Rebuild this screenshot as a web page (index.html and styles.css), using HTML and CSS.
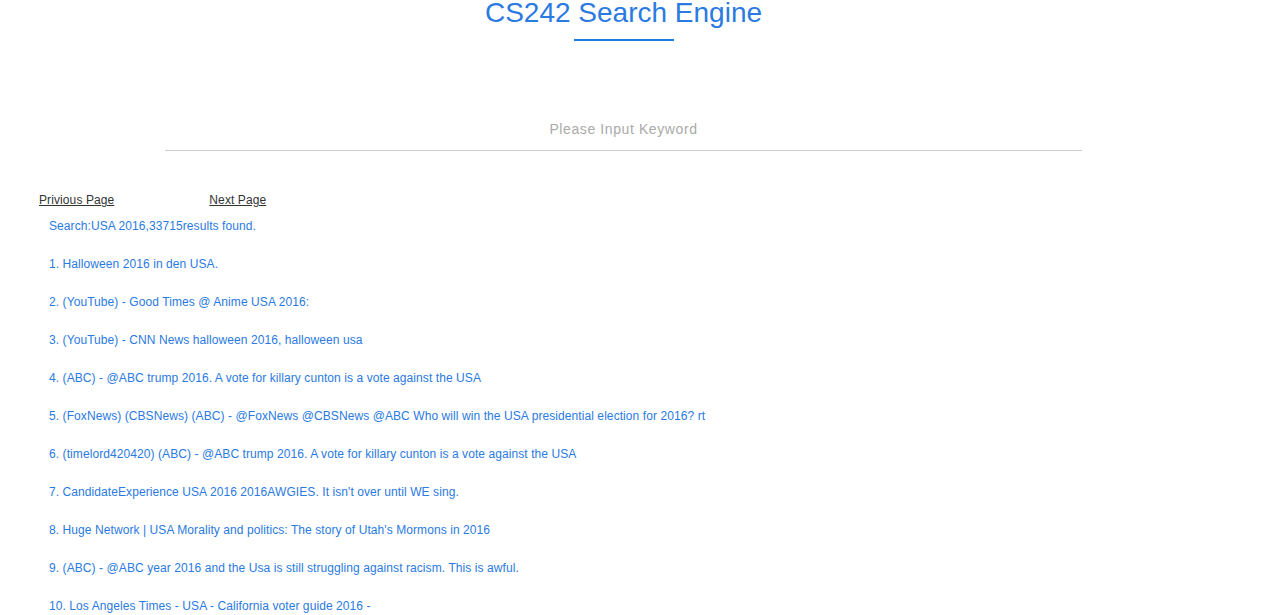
FILE: index.html
```html
<!DOCTYPE html>
<html>
<head>
<meta charset="utf-8">
<link rel="stylesheet" href="styles.css">
</head>
<body>
<div class="page">
  <header class="head">
    <h1 class="title">CS242 Search Engine</h1>
    <div class="title-bar"></div>
  </header>
  <div class="search">
    <input class="search-input" type="text" placeholder="Please Input Keyword">
  </div>
  <nav class="pager">
    <a href="#" class="pager-link">Privious Page</a>
    <a href="#" class="pager-link">Next Page</a>
  </nav>
  <ul class="results">
    <li class="summary">Search:USA 2016,33715results found.</li>
    <li>1. Halloween 2016 in den USA.</li>
    <li>2. (YouTube) - Good Times @ Anime USA 2016:</li>
    <li>3. (YouTube) - CNN News halloween 2016, halloween usa</li>
    <li>4. (ABC) - @ABC trump 2016. A vote for killary cunton is a vote against the USA</li>
    <li>5. (FoxNews) (CBSNews) (ABC) - @FoxNews @CBSNews @ABC Who will win the USA presidential election for 2016? rt</li>
    <li>6. (timelord420420) (ABC) - @ABC trump 2016. A vote for killary cunton is a vote against the USA</li>
    <li>7. CandidateExperience USA 2016 2016AWGIES. It isn't over until WE sing.</li>
    <li>8. Huge Network | USA Morality and politics: The story of Utah's Mormons in 2016</li>
    <li>9. (ABC) - @ABC year 2016 and the Usa is still struggling against racism. This is awful.</li>
    <li>10. Los Angeles Times - USA - California voter guide 2016 -</li>
  </ul>
</div>
</body>
</html>
```
FILE: styles.css
```css
html, body {
  margin: 0;
  padding: 0;
  background: #fff;
  font-family: "Liberation Sans", Arial, sans-serif;
}
.page {
  width: 1247px;
}
.head {
  display: flex;
  flex-direction: column;
  align-items: center;
}
.title {
  margin: 0;
  font-weight: normal;
  font-size: 28px;
  line-height: 26px;
  color: #2a7ae2;
}
.title-bar {
  width: 100px;
  height: 2px;
  margin-top: 13px;
  background: #1e7be0;
}
.search {
  display: flex;
  justify-content: center;
  margin-top: 80px;
}
.search-input {
  width: 917px;
  box-sizing: border-box;
  border: none;
  border-bottom: 1px solid #ccc;
  outline: none;
  padding: 0 0 13px;
  font-family: "Liberation Sans", Arial, sans-serif;
  font-size: 14px;
  letter-spacing: 0.6px;
  text-align: center;
  color: #555;
  background: transparent;
}
.search-input::placeholder {
  color: #aaa;
}
.pager {
  display: flex;
  gap: 95px;
  margin-top: 42px;
  padding-left: 39px;
}
.pager-link {
  font-size: 12px;
  letter-spacing: 0.1px;
  color: #333;
  text-decoration: underline;
}
.results {
  list-style: none;
  margin: 12px 0 0;
  padding: 0 0 0 49px;
  font-size: 12px;
  letter-spacing: 0.08px;
  color: #2a7ae2;
}
.results li {
  line-height: 14px;
  margin-bottom: 24px;
}
```
